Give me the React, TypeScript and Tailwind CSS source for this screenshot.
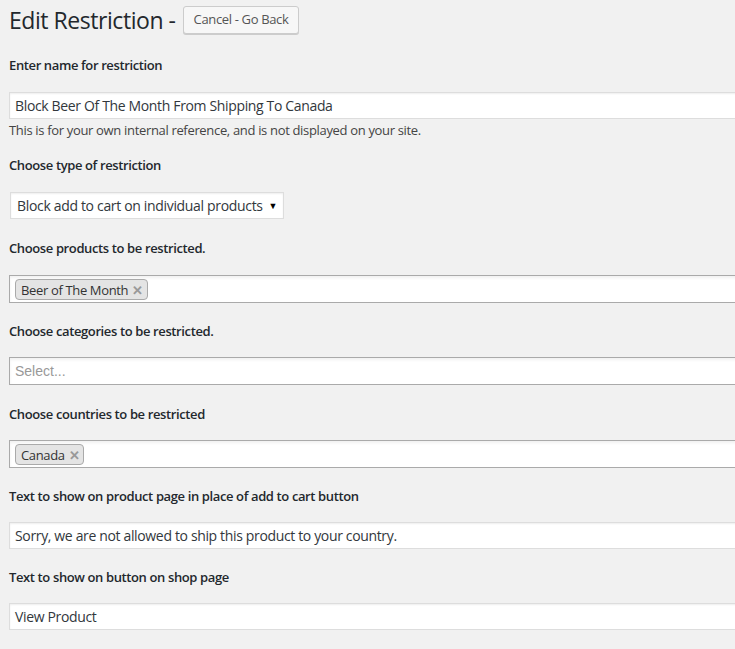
import React from "react";

const font = "font-['Open_Sans','Noto_Sans',sans-serif]";

function Label({ children, mt }: { children: React.ReactNode; mt: string }) {
  return (
    <div className={`${mt} h-[20px] leading-[20px] text-[13px] font-semibold text-[#23282d] tracking-[-0.38px]`}>
      {children}
    </div>
  );
}

function TextInput({ value, mt }: { value: string; mt: string }) {
  return (
    <div
      className={`${mt} h-[27px] w-[760px] bg-white border border-[#ddd] shadow-[inset_0_1px_2px_rgba(0,0,0,0.07)] flex items-center pl-[5px] text-[14px] text-[#32373c] tracking-[-0.35px]`}
    >
      {value}
    </div>
  );
}

function Tag({ text }: { text: string }) {
  return (
    <div className="ml-[5px] h-[21px] flex items-center border border-[#aaa] rounded-[4px] bg-[#e4e4e4] pl-[5px] pr-[4px] pt-[2px] text-[13px] leading-[17px] text-[#333] tracking-[-0.35px]">
      <span>{text}</span>
      <span className="ml-[4px] text-[#999] font-bold text-[13px] leading-none">✕</span>
    </div>
  );
}

function Select2({ children, mt }: { children: React.ReactNode; mt: string }) {
  return (
    <div
      className={`${mt} h-[28px] w-[760px] bg-white border border-[#aaa] shadow-[inset_0_2px_3px_rgba(0,0,0,0.06)] flex items-center`}
    >
      {children}
    </div>
  );
}

export default function App() {
  return (
    <div className={`w-[735px] h-[649px] overflow-hidden bg-[#f1f1f1] ${font}`}>
      <div className="pl-[9px] pt-[4px]">
        <div className="h-[32px] flex items-center">
          <h1 className="text-[23px] leading-[29px] font-normal text-[#23282d] tracking-[-0.45px]">Edit Restriction -</h1>
          <button className="ml-[7px] h-[28px] px-[10px] bg-[#f7f7f7] border border-[#ccc] rounded-[3px] shadow-[0_1px_0_#ccc] text-[13px] text-[#555] tracking-[-0.35px]">
            Cancel - Go Back
          </button>
        </div>

        <Label mt="mt-[19px]">Enter name for restriction</Label>
        <TextInput mt="mt-[17px]" value="Block Beer Of The Month From Shipping To Canada" />
        <div className="mt-[1px] h-[20px] leading-[20px] text-[13px] text-[#444] tracking-[-0.33px]">
          This is for your own internal reference, and is not displayed on your site.
        </div>

        <Label mt="mt-[15px]">Choose type of restriction</Label>
        <div className="mt-[17px] ml-[1px] h-[27px] w-[274px] bg-white border border-[#ddd] shadow-[inset_0_1px_2px_rgba(0,0,0,0.07)] flex items-center pl-[6px] text-[14px] text-[#32373c] tracking-[-0.33px]">
          <span>Block add to cart on individual products</span>
          <span className="ml-auto mr-[6px] text-[9px] text-black">▼</span>
        </div>

        <Label mt="mt-[19px]">Choose products to be restricted.</Label>
        <Select2 mt="mt-[17px]">
          <Tag text="Beer of The Month" />
        </Select2>

        <Label mt="mt-[18px]">Choose categories to be restricted.</Label>
        <Select2 mt="mt-[16px]">
          <span className="pl-[5px] text-[14px] text-[#999] font-['Liberation_Sans',Arial,sans-serif]">Select...</span>
        </Select2>

        <Label mt="mt-[19px]">Choose countries to be restricted</Label>
        <Select2 mt="mt-[16px]">
          <Tag text="Canada" />
        </Select2>

        <Label mt="mt-[18px]">Text to show on product page in place of add to cart button</Label>
        <TextInput mt="mt-[16px]" value="Sorry, we are not allowed to ship this product to your country." />

        <Label mt="mt-[18px]">Text to show on button on shop page</Label>
        <TextInput mt="mt-[16px]" value="View Product" />
      </div>
    </div>
  );
}
